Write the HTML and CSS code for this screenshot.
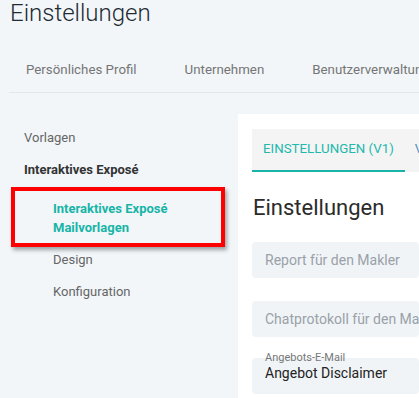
FILE: index.html
```html
<!DOCTYPE html>
<html lang="de">
<head>
    <meta charset="UTF-8">
    <meta name="viewport" content="width=device-width, initial-scale=1.0">
    <title>Einstellungen</title>
    <link rel="stylesheet" href="styles.css">
</head>
<body>

    <!-- Page heading -->
    <h1 class="page-title">Einstellungen</h1>

    <!-- Top navigation -->
    <nav class="top-tabs">
        <a class="top-tab">Persönliches Profil</a>
        <a class="top-tab">Unternehmen</a>
        <a class="top-tab">Benutzerverwaltung</a>
    </nav>

    <div class="main">
        <!-- Sidebar -->
        <ul class="sidebar">
            <li class="side-item">Vorlagen</li>
            <li class="side-item side-group">Interaktives Exposé</li>
            <li class="side-item sub active">
                Interaktives Exposé<br>Mailvorlagen
                <span class="highlight-box"></span>
            </li>
            <li class="side-item sub">Design</li>
            <li class="side-item sub">Konfiguration</li>
        </ul>

        <!-- Content panel -->
        <section class="panel">
            <div class="panel-tabs">
                <div class="panel-tab active">Einstellungen (V1)</div>
                <div class="panel-tab">Vorschau</div>
            </div>

            <h2 class="panel-title">Einstellungen</h2>

            <div class="field field-first">
                <span class="placeholder">Report für den Makler</span>
            </div>
            <div class="field field-second">
                <span class="placeholder">Chatprotokoll für den Makler</span>
            </div>
            <div class="field field-labelled">
                <span class="field-label">Angebots-E-Mail</span>
                <span class="value">Angebot Disclaimer</span>
            </div>
        </section>
    </div>

</body>
</html>
```

FILE: styles.css
```css
/* General Styles */
body {
    margin: 0;
    font-family: Roboto, 'Liberation Sans', sans-serif;
    background-color: #f2f6f9;
    color: #333;
    overflow: hidden;
    height: 398px;
}

.page-title {
    margin: 0;
    padding: 1px 0 0 10px;
    font-size: 24px;
    font-weight: 300;
    line-height: 24px;
    color: #222a33;
}

/* Top tabs */
.top-tabs {
    display: flex;
    gap: 48px;
    margin-left: 9px;
    padding: 37px 0 14px 17px;
    border-bottom: 1px solid #e2e7eb;
    white-space: nowrap;
    overflow: hidden;
}

.top-tab {
    font-size: 13.3px;
    line-height: 16px;
    color: #757575;
}

/* Layout */
.main {
    display: flex;
}

/* Sidebar */
.sidebar {
    list-style: none;
    margin: 0;
    padding: 29px 0 0 0;
    width: 238px;
    flex-shrink: 0;
}

.side-item {
    padding: 8px 0 8px 24px;
    font-size: 13px;
    line-height: 16px;
    color: #666;
}

.side-group {
    font-weight: 700;
    color: #333;
}

.side-item.sub {
    padding-left: 53px;
}

.side-item.active {
    position: relative;
    padding-top: 13px;
    padding-bottom: 7px;
    line-height: 19px;
    font-weight: 700;
    color: #17b4a7;
}

/* Red annotation box */
.highlight-box {
    position: absolute;
    top: 1px;
    bottom: -3px;
    left: 11px;
    width: 206px;
    border: 4px solid #ff0000;
    box-shadow: 2px 3px 4px rgba(0, 0, 0, 0.35);
}

/* Content panel */
.panel {
    flex: 1;
    margin-top: 21px;
    padding: 15px 0 0 14px;
    background-color: #fff;
    min-width: 0;
    height: 284px;
    box-sizing: border-box;
    overflow: hidden;
}

.panel-tabs {
    display: flex;
    background-color: #f4f4f4;
    white-space: nowrap;
}

.panel-tab {
    padding: 12px 11px 13px 11px;
    font-size: 13.3px;
    line-height: 16px;
    text-transform: uppercase;
    color: #22b8ae;
    border-bottom: 2px solid transparent;
}

.panel-tab:not(.active) {
    padding-left: 10px;
    color: #5a8ec0;
}

.panel-tab.active {
    border-bottom-color: #17b4a7;
}

.panel-title {
    margin: 23px 0 0 1px;
    font-size: 22px;
    font-weight: 400;
    line-height: 26px;
    color: #2b2b2b;
}

/* Form fields */
.field {
    position: relative;
    height: 36px;
    box-sizing: border-box;
    padding: 10px 0 10px 13px;
    background-color: #f0f4f7;
    border-radius: 4px;
    font-size: 14px;
    line-height: 16px;
    white-space: nowrap;
}

.field-first {
    margin-top: 21px;
}

.field-second {
    margin-top: 23px;
}

.field-labelled {
    margin-top: 21px;
    padding-top: 7px;
}

.placeholder {
    color: #9aa1a8;
}

.value {
    color: #222;
}

.field-label {
    position: absolute;
    left: 13px;
    top: -7px;
    font-size: 11px;
    line-height: 13px;
    color: #777;
}
```
